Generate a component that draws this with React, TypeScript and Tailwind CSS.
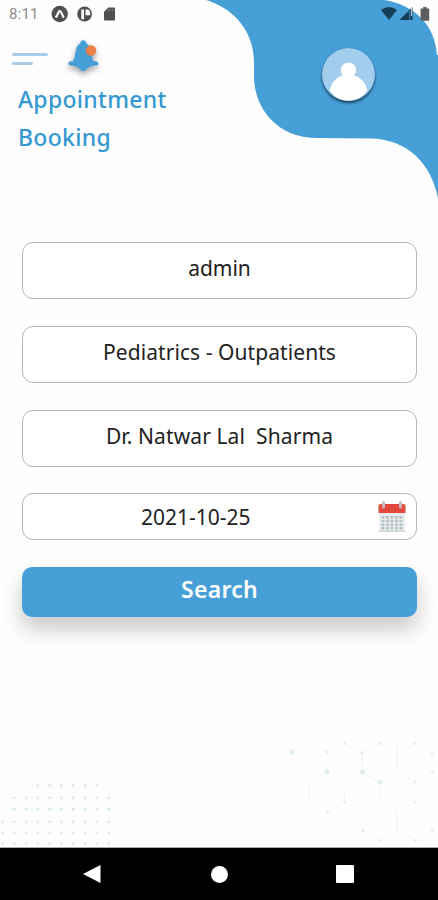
interface FieldProps {
  value: string
  textClass: string
}

function HeaderShape() {
  return (
    <svg className="absolute top-0 right-0" width="238" height="204" viewBox="200 0 238 204" fill="none">
      <path
        d="M206 0C235 9 254 32 254 62V76C254 110 279 137.5 315 138L370 138.5C407 139 431 163 438 198V55H437C435 25 415 5 384 0Z"
        fill="#479fd8"
      />
    </svg>
  )
}

function StatusBar() {
  return (
    <div className="flex h-7 items-center pl-[9px] pr-2 text-[#626262]">
      <span className="w-[42px] font-['Roboto',sans-serif] text-[15px] tracking-[0.2px] text-[#8a8a8a]">8:11</span>
      <svg width="66" height="18" viewBox="51 5 66 18">
        <circle cx="59.7" cy="14" r="8.2" fill="#505050" />
        <path d="M56.2 16.8C58 14.5 58.5 10.8 59.8 10.8S61.8 14.5 63.4 16.8" fill="none" stroke="#fff" strokeWidth="2.2" strokeLinecap="round" strokeLinejoin="round" />
        <circle cx="84.6" cy="14" r="7.4" fill="#505050" />
        <path d="M81.3 9.5H84V19.3H81.3ZM85.5 9.5H88.5Q90.3 11.2 90.3 13.2V15.2H85.5Z" fill="#fff" />
        <path d="M108.3 7.5H114Q115 7.5 115 8.5V19.5Q115 20.5 114 20.5H105Q104 20.5 104 19.5V11.8Z" fill="#505050" />
        <path d="M108 9V11M110.3 9V11M112.6 9V11" stroke="#999" strokeWidth=".7" />
      </svg>
      <svg className="ml-auto" width="50" height="16" viewBox="380 6 50 16">
        <path d="M381 10Q389 4 397 10L389 20Z" fill="#173e59" />
        <path d="M399.5 20 412.5 7V20Z" fill="#173e59" />
        <path d="M409.5 11V20" stroke="#327cac" strokeWidth="1.2" />
        <path d="M411.5 8V16" stroke="#b9cad6" strokeWidth="1.2" />
        <path d="M423.2 7H426.6V8.5H429.2V20.7H420.6V8.5H423.2Z" fill="#5d5d5d" />
      </svg>
    </div>
  )
}

function Bell() {
  return (
    <svg className="ml-[15px] drop-shadow-[0_3px_3px_rgba(0,0,0,0.38)]" width="40" height="36" viewBox="63 38 40 36">
      <path
        d="M83.3 40.3C85 40.3 86.2 41.4 86.2 43.2C89.5 45 90.6 48 91.2 52C91.8 56.5 92.3 60 94.2 61.5C98.8 60.5 99.6 65.2 96.3 65.6C93 65.8 90.5 66.3 88 67.7C86.2 70 84.7 71.3 83.3 71.3C81.8 71.3 80.4 70 78.6 67.7C76.1 66.3 73.6 65.8 70.3 65.6C67.2 65.2 67.8 60.5 72.4 61.5C74.3 60 74.8 56.5 75.5 52C76.1 48 77.1 45 80.4 43.2C80.4 41.4 81.6 40.3 83.3 40.3Z"
        fill="#479fd8"
      />
      <circle cx="91" cy="50.5" r="5.2" fill="#ec7f47" />
    </svg>
  )
}

function Avatar() {
  return (
    <svg className="rounded-full shadow-[0_2px_3px_rgba(0,0,0,0.6)]" width="53" height="53" viewBox="0 0 54 54">
      <circle cx="27" cy="27" r="27" fill="#a3cdec" />
      <path
        d="M27 15C31.7 15 34.8 18.2 34.8 22.3C34.8 24.8 33.8 26.5 32.5 27.8C40 30 45.3 36.5 46 43.2C41.5 50 34.8 53.6 27 53.6C19.2 53.6 12.5 50 8 43.2C8.7 36.5 14 30 21.5 27.8C20.2 26.5 19.2 24.8 19.2 22.3C19.2 18.2 22.3 15 27 15Z"
        fill="#fff"
      />
    </svg>
  )
}

function CalendarIcon() {
  return (
    <svg width="28" height="32" viewBox="0 0 28 32">
      <path d="M1 11H27V29Q27 31 25 31H3Q1 31 1 29Z" fill="#e6eced" />
      <path d="M1 29.5H27Q27 31 25 31H3Q1 31 1 29.5Z" fill="#cdd5d8" />
      <path d="M0.5 5Q0.5 3 2.5 3H25.5Q27.5 3 27.5 5V12H0.5Z" fill="#e2483c" />
      <path d="M5.5 1.5V6M22.5 1.5V6" stroke="#c9bbbb" strokeWidth="3" strokeLinecap="round" />
      <path d="M3.5 16.3H24.5M3.5 20H24.5M3.5 23.7H24.5M3.5 27.2H24.5" stroke="#b9c0c3" strokeWidth="2.4" strokeDasharray="2.8 1.7" />
    </svg>
  )
}

function Field({ value, textClass }: FieldProps) {
  return (
    <div className="flex h-[57px] items-center justify-center rounded-[11px] border border-[#b5b5b5] bg-white pb-[6px]">
      <span className={`whitespace-pre text-[21px] leading-7 text-[#222] ${textClass}`}>{value}</span>
    </div>
  )
}

const dotRows = [
  { y: 785.5, from: 3, to: 8 },
  { y: 798, from: 1, to: 9 },
  { y: 809.3, from: 1, to: 9 },
  { y: 822, from: 0, to: 9 },
  { y: 833, from: 0, to: 9 },
  { y: 843.5, from: 0, to: 9 },
]

const nodes = [
  [344.5, 743.5], [379.5, 743.5], [415, 743.5], [327, 752], [362, 752.5], [432, 752.5],
  [432.5, 772], [415, 782], [415, 802], [344.5, 802], [327.5, 811.5], [362.5, 830.5],
  [432.5, 830.5], [380, 840.5], [415.5, 840.5],
]

function Backdrop() {
  return (
    <svg className="absolute bottom-0 left-0" width="438" height="167" viewBox="0 680 438 167">
      {/* Dotted grid */}
      <g fill="#d9efeb">
        {dotRows.map((row) =>
          Array.from({ length: row.to - row.from + 1 }, (_, i) => (
            <circle key={`${row.y}-${i}`} cx={2.5 + (row.from + i) * 11.8} cy={row.y} r="1.6" />
          ))
        )}
      </g>
      {/* Molecules */}
      <g fill="none" stroke="#f8fbfc" strokeWidth="1">
        <path d="M397 692 422 706V730L397 742 368 730V706Z" />
        <path d="M327 752 344.5 743.5 362 752.5V772L344.5 782 327 772ZM362 752 379.5 743.5 397 752V772L380 782 362 772ZM397 752 415 743.5 432 752V772L415 782 397 772Z" />
        <path d="M309 782 327 772 344.5 782V802L327.5 811.5 309 802ZM344.5 782 362 772 380 782V802L362 811 344.5 802ZM380 782 397 792 415 782V802L397 811 380 802ZM362 811 380 802 397 811V830L380 840 362 830ZM397 811 415 802 432 811V830L415 840 397 830Z" />
      </g>
      <path d="M397 740V771M309 783V801M362 772 380 782M397 812V832M362 753V768M344.5 792V802" stroke="#eef5f6" fill="none" />
      <g fill="#e5eff1">
        {nodes.map(([x, y]) => (
          <circle key={`${x}-${y}`} cx={x} cy={y} r="1.6" />
        ))}
      </g>
      <g fill="#e0eef0">
        <circle cx="292" cy="752" r="2.6" />
        <circle cx="327" cy="771.5" r="2.6" />
        <circle cx="362.5" cy="772" r="2.6" />
        <circle cx="380" cy="782" r="2.6" />
      </g>
    </svg>
  )
}

function NavigationBar() {
  return (
    <nav className="flex h-[53px] items-center justify-between border-t border-[#aaa] bg-black pr-[84px] pl-[83px]">
      <svg width="18" height="20" viewBox="0 0 18 20"><path d="M17.5 1V19L0 10Z" fill="#fff" /></svg>
      <div className="ml-px size-[17px] rounded-full bg-white" />
      <div className="size-[18px] rounded-[1px] bg-white" />
    </nav>
  )
}

export default function App() {
  return (
    <div className="flex h-[900px] w-[438px] flex-col overflow-hidden bg-[#fefefe] font-['Noto_Sans',sans-serif]">
      <main className="relative h-[847px]">
        <HeaderShape />
        <Backdrop />
        <div className="relative">
          <StatusBar />
          <header className="flex h-[214px] justify-between">
            <div className="pt-[10px]">
              <div className="flex h-9 items-start pl-3">
                <div className="flex flex-col gap-[6px] pt-[15px]">
                  <div className="h-[3px] w-9 rounded-full bg-[#a9cce6]" />
                  <div className="h-[3px] w-[21px] rounded-full bg-[#a9cce6]" />
                </div>
                <Bell />
              </div>
              <h1 className="mt-[6px] pl-[18px] text-[23px] leading-[38px] font-medium text-[#3498d3]">
                <span className="block tracking-[0.3px]">Appointment</span>
                <span className="block tracking-[0.3px]">Booking</span>
              </h1>
            </div>
            <div className="pt-5 pr-[63px]">
              <Avatar />
            </div>
          </header>
          <form className="flex flex-col pr-[21px] pl-[22px]">
            <div className="flex flex-col gap-[27px]">
              <Field value="admin" textClass="tracking-[0px]" />
              <Field value="Pediatrics - Outpatients" textClass="tracking-[0.07px]" />
              <Field value="Dr. Natwar Lal  Sharma" textClass="tracking-[0.1px]" />
            </div>
            <div className="mt-[26px] flex h-[47px] items-center justify-between rounded-[11px] border border-[#b5b5b5] bg-white pr-[10px] pl-[118px]">
              <span className="text-[21px] leading-7 text-[#222]">2021-10-25</span>
              <CalendarIcon />
            </div>
            <button
              type="button"
              className="mt-[27px] flex h-[50px] items-center justify-center rounded-[10px] bg-[#479fd8] pb-[6px] text-[23px] font-semibold tracking-[0.3px] text-white shadow-[0_12px_22px_rgba(0,0,0,0.22)]"
            >
              Search
            </button>
          </form>
        </div>
      </main>
      <NavigationBar />
    </div>
  )
}
